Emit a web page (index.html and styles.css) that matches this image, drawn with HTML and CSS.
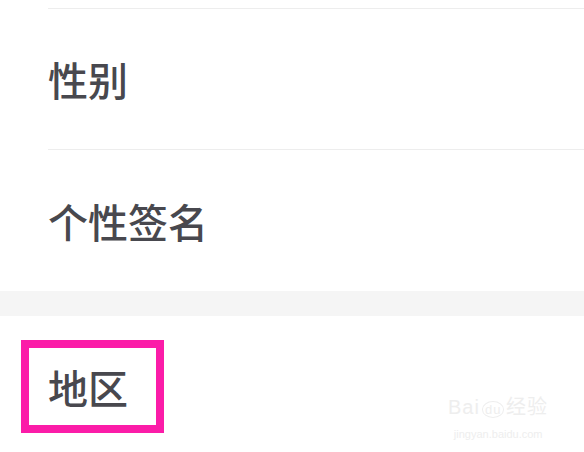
FILE: index.html
```html
<!DOCTYPE html>
<html lang="zh-CN">
<head>
<meta charset="utf-8">
<link rel="stylesheet" href="styles.css">
</head>
<body>
<div class="page">
  <div class="group">
    <div class="top-gap"></div>
    <div class="row row-first"><span class="label">性别</span></div>
    <div class="row row-second"><span class="label">个性签名</span></div>
  </div>
  <div class="band"></div>
  <div class="group">
    <div class="row row-third"><span class="label highlighted">地区</span></div>
  </div>
  <div class="watermark">
    <div class="wm-logo">Bai<span class="wm-du">du</span>经验</div>
    <div class="wm-url">jingyan.baidu.com</div>
  </div>
</div>
</body>
</html>
```
FILE: styles.css
```css
html, body {
  margin: 0;
  padding: 0;
  background: #ffffff;
}
.page {
  position: relative;
  width: 584px;
  height: 452px;
  overflow: hidden;
  font-family: "Noto Sans CJK SC", "Noto Sans", sans-serif;
  color: #48484e;
}
.top-gap {
  height: 8px;
}
.group {
  background: #ffffff;
  padding-left: 48px;
}
.row {
  display: flex;
  align-items: center;
  border-top: 1px solid #ededed;
}
.row-first {
  height: 140px;
}
.row-second {
  height: 141px;
}
.row-third {
  height: 142px;
  border-top: none;
}
.label {
  display: inline-block;
  font-size: 40px;
  line-height: 40px;
  font-weight: 500;
  letter-spacing: 0;
}
.band {
  height: 25px;
  background: #f5f5f5;
}
.highlighted {
  position: relative;
}
.highlighted::after {
  content: "";
  position: absolute;
  left: -27px;
  right: -36px;
  top: -27px;
  bottom: -26px;
  border: 8px solid #fb1ca8;
}
.watermark {
  position: absolute;
  left: 448px;
  top: 396px;
  color: #eeeeee;
  font-family: "Liberation Sans", sans-serif;
  text-align: center;
}
.wm-logo {
  font-size: 20px;
  line-height: 22px;
  letter-spacing: 1px;
}
.wm-du {
  font-size: 13px;
  border: 1px solid #eeeeee;
  border-radius: 50%;
  padding: 0 2px;
  margin: 0 2px;
}
.wm-url {
  font-size: 11px;
  line-height: 14px;
  margin-top: 6px;
}
```
